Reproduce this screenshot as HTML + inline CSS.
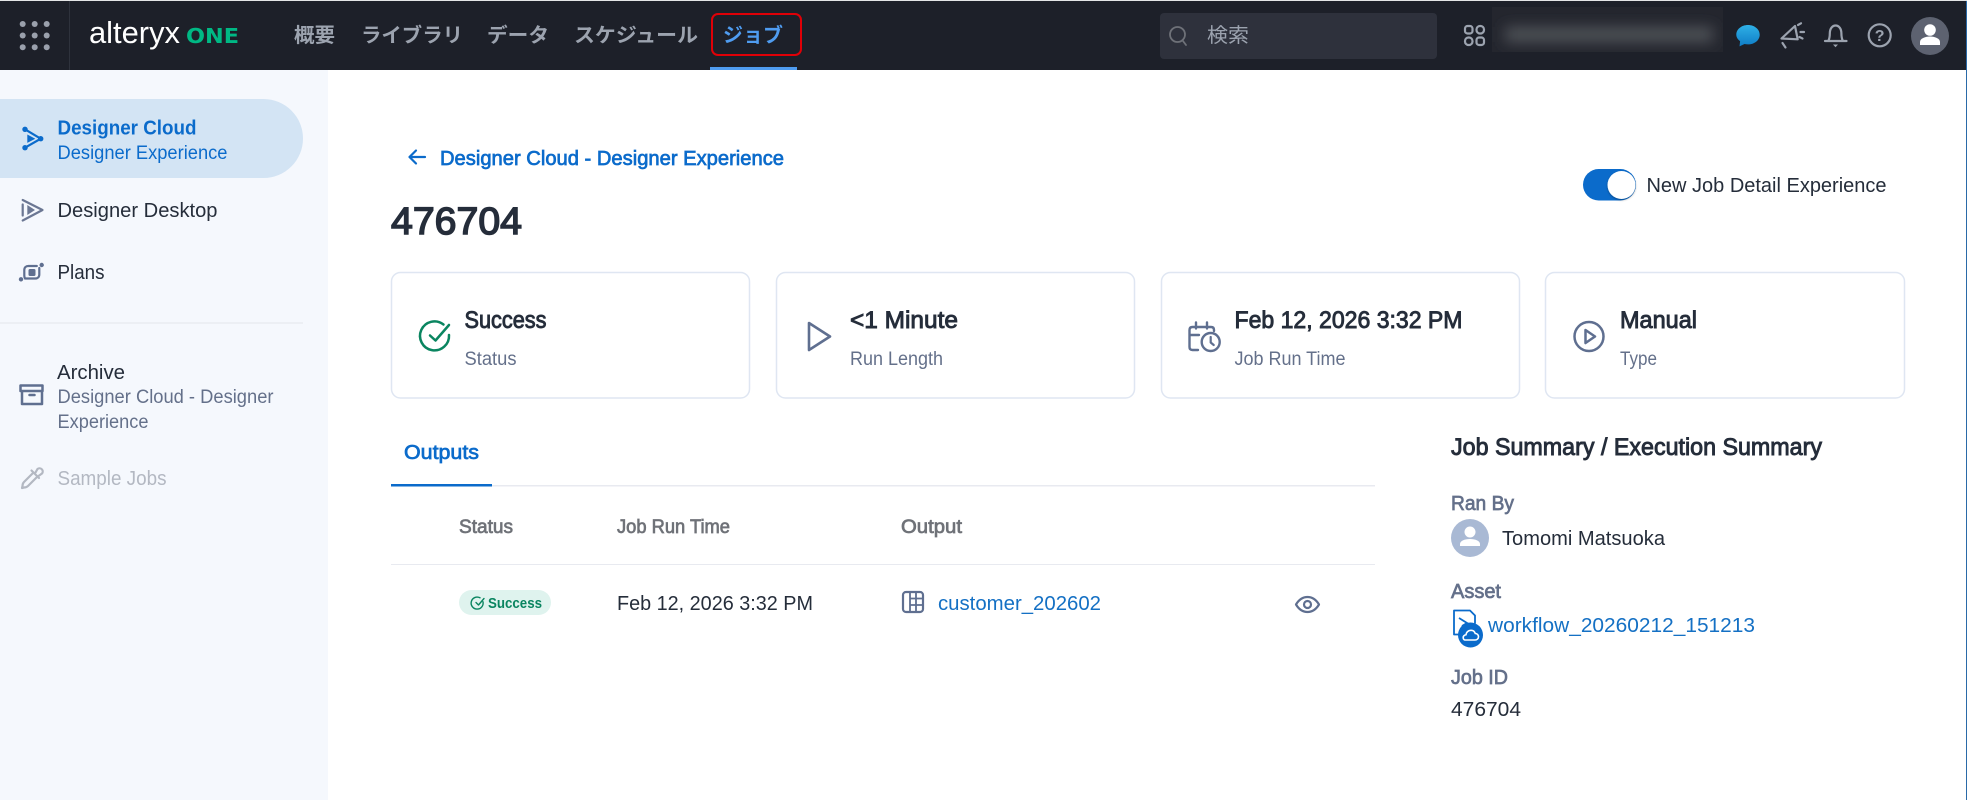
<!DOCTYPE html>
<html lang="ja">
<head>
<meta charset="utf-8">
<title>Job 476704</title>
<style>
html,body{margin:0;padding:0;background:#fff;width:1967px;height:800px;overflow:hidden}
svg{display:block}
text{font-family:"Liberation Sans","Noto Sans CJK JP",sans-serif;font-size:20px;fill:#2b3340}
.m{stroke-width:.7px;paint-order:stroke}
.blue{fill:#0b6bcb}.blue.m{stroke:#0b6bcb}
.link{fill:#1470c4}
.gray{fill:#64708a}.gray.m{stroke:#64708a}
.dk.m{stroke:#252d3a}.dk{fill:#252d3a}
.nav{font-weight:700;fill:#9ca3af}
.th{fill:#6f7278;stroke:#6f7278}
.i{fill:none;stroke:#5f6f90;stroke-width:2.2;stroke-linecap:round;stroke-linejoin:round}
.h{fill:none;stroke:#9ca3af;stroke-width:2.2;stroke-linecap:round;stroke-linejoin:round}
.card{fill:#fff;stroke:#dfe6f2;stroke-width:1.5}
</style>
</head>
<body>
<svg width="1967" height="800" viewBox="0 0 1967 800" xmlns="http://www.w3.org/2000/svg">
<defs>
<linearGradient id="chat" x1="0" y1="0" x2="0" y2="1"><stop offset="0" stop-color="#2fb0e6"/><stop offset="1" stop-color="#0f7cc6"/></linearGradient>
<filter id="bl" x="-20%" y="-150%" width="140%" height="400%"><feGaussianBlur stdDeviation="7"/></filter>
<filter id="sh" x="-30%" y="-30%" width="160%" height="160%"><feDropShadow dx="0" dy="1" stdDeviation="1" flood-color="#000" flood-opacity=".35"/></filter>
<clipPath id="blc"><rect x="1492" y="7" width="231" height="45"/></clipPath>
</defs>

<!-- header -->
<rect width="1967" height="800" fill="#fff"/>
<rect y="1" width="1967" height="69" fill="#1d2029"/>
<rect width="1967" height="1" fill="#e4e5e6"/>
<rect x="69" y="1" width="1" height="69" fill="#2e323c"/>
<g fill="#9aa0ac">
<circle cx="22.7" cy="24" r="3"/><circle cx="34.7" cy="24" r="3"/><circle cx="46.7" cy="24" r="3"/>
<circle cx="22.7" cy="35.5" r="3"/><circle cx="34.7" cy="35.5" r="3"/><circle cx="46.7" cy="35.5" r="3"/>
<circle cx="22.7" cy="47.3" r="3"/><circle cx="34.7" cy="47.3" r="3"/><circle cx="46.7" cy="47.3" r="3"/>
</g>
<text x="89" y="43" style="font-size:31px;fill:#fff" textLength="91" lengthAdjust="spacingAndGlyphs">alteryx</text>
<text x="186" y="43" style="font-family:'DejaVu Sans',sans-serif;font-size:20.500px;font-weight:700;fill:#00b884" textLength="53" lengthAdjust="spacingAndGlyphs">ONE</text>
<text class="nav" x="294" y="42" textLength="41" lengthAdjust="spacingAndGlyphs">概要</text>
<text class="nav" x="361" y="42" textLength="102" lengthAdjust="spacingAndGlyphs">ライブラリ</text>
<text class="nav" x="487" y="42" textLength="62" lengthAdjust="spacingAndGlyphs">データ</text>
<text class="nav" x="574" y="42" textLength="124" lengthAdjust="spacingAndGlyphs">スケジュール</text>
<text class="nav" x="723" y="42" style="fill:#4f9cf0" textLength="60" lengthAdjust="spacingAndGlyphs">ジョブ</text>
<rect x="712" y="14" width="89" height="41" rx="6" fill="none" stroke="#e00007" stroke-width="2"/>
<rect x="710" y="67" width="87" height="3" fill="#4f9cf0"/>

<rect x="1160" y="13" width="277" height="46" rx="4" fill="#2e313c"/>
<circle cx="1177.5" cy="34.5" r="7.5" fill="none" stroke="#6e7178" stroke-width="1.8"/>
<path d="M1183 41l3 4" stroke="#6e7178" stroke-width="1.8" fill="none" stroke-linecap="round"/>
<text x="1207" y="42" style="fill:#9ca3af" textLength="42" lengthAdjust="spacingAndGlyphs">検索</text>

<g class="h">
<rect x="1465" y="26" width="7.5" height="7.5" rx="2.5"/><rect x="1476.5" y="26" width="7.5" height="7.5" rx="3.5"/>
<rect x="1465" y="37.5" width="7.5" height="7.5" rx="3.5"/><rect x="1476.5" y="37.5" width="7.5" height="7.5" rx="2.5"/>
</g>
<rect x="1492" y="7" width="231" height="45" fill="#24262e"/>
<g clip-path="url(#blc)"><rect x="1505" y="27" width="208" height="15" fill="#505259" filter="url(#bl)"/></g>

<path d="M1748 25c6.500 0 11.700 4.300 11.700 9.700s-5.200 9.700-11.700 9.700c-1.200 0-2.400-.2-3.500-.4l-5 2.400 .6-5.300c-2.400-1.800-3.800-3.900-3.800-6.400 0-5.400 5.200-9.700 11.700-9.700z" fill="url(#chat)"/>
<g class="h">
<path d="M1781.500 38.500L1795 26l2.700 13.300z"/><path d="M1782.500 43l3 4.500"/>
<path d="M1798 25l3-1.700M1800.500 32h3.500M1799.500 37l3 1.500"/>
<path d="M1825 41h21.500M1828.500 40.500c1-2 1.300-3.500 1.300-7 0-4.800 2.500-8 5.800-8s5.800 3.200 5.800 8c0 3.500.3 5 1.300 7"/>
<circle cx="1879.700" cy="35.300" r="11"/>
</g>
<path d="M1833 44.500h5l-2.500 2.800z" fill="#9ca3af"/>
<text x="1879.700" y="41" text-anchor="middle" style="font-size:16px;font-weight:700;fill:#9ca3af">?</text>
<circle cx="1930" cy="36" r="19" fill="#5d6270"/>
<circle cx="1930" cy="30" r="5.800" fill="#fff"/>
<path d="M1920 45v-3c0-3.500 5-5.500 10-5.500s10 2 10 5.500v3z" fill="#fff"/>

<!-- sidebar -->
<rect y="70" width="328" height="730" fill="#f5f8fd"/>
<path d="M0 99h263.500a39.500 39.500 0 0 1 0 79H0z" fill="#d3e4f4"/>
<g fill="#0b6bcb" stroke="#0b6bcb">
<path d="M25 129.300L40.700 138.700 25 147.700" fill="none" stroke-width="2.200"/>
<circle cx="25" cy="129.300" r="2.700" stroke="none"/><circle cx="40.700" cy="138.700" r="2.700" stroke="none"/><circle cx="25" cy="147.700" r="2.700" stroke="none"/>
<path d="M27.300 134.500l8 4.200-8 4.200z" stroke="none"/>
</g>
<text class="blue" style="font-weight:700" x="57.500" y="134.500" textLength="139" lengthAdjust="spacingAndGlyphs">Designer Cloud</text>
<text class="blue" x="57.500" y="159" style="font-size:19px" textLength="170" lengthAdjust="spacingAndGlyphs">Designer Experience</text>

<path class="i" style="stroke:#6b7793" d="M22.700 200L42.500 210 22.700 220.500M22.700 204.500v11"/>
<path d="M27.300 205l7.700 5-7.700 5z" fill="#6b7793"/>
<text class="dk" x="57.500" y="217" textLength="160" lengthAdjust="spacingAndGlyphs">Designer Desktop</text>

<path class="i" d="M25 278.500c-.5-1-.7-1.800-.7-3v-5.500c0-2.500 1.700-4 4-4h8.500M39.300 268v6.500c0 2.500-1.700 4-4 4H25"/>
<rect x="28.500" y="269" width="7" height="7" rx="1.500" fill="#5f6f90"/>
<circle cx="41.700" cy="265" r="2.200" fill="#5f6f90"/><circle cx="21" cy="279.300" r="2.200" fill="#5f6f90"/>
<text class="dk" x="57.500" y="279" textLength="47" lengthAdjust="spacingAndGlyphs">Plans</text>

<rect y="322.500" width="303" height="1" fill="#e2e6ec"/>

<path class="i" style="stroke-width:2.500" d="M20.500 385.500h22v5.500h-22zM22 391v13h20v-13M29.500 395h5"/>
<text class="dk" x="57" y="379" textLength="68" lengthAdjust="spacingAndGlyphs">Archive</text>
<text class="gray" x="57.500" y="403" style="font-size:19.500px" textLength="216" lengthAdjust="spacingAndGlyphs">Designer Cloud - Designer</text>
<text class="gray" x="57.500" y="428" style="font-size:19.500px" textLength="91" lengthAdjust="spacingAndGlyphs">Experience</text>
<path class="i" style="stroke:#b3b8c2" d="M33.500 472.500L24 482c-1 1-1.500 2.500-1.500 4l-.5 2 2-.5c1.500 0 3-.5 4-1.500l9.500-9.500M31.500 470.500L39 478M35.500 472.500l2-3.500a3.200 3.200 0 0 1 4.500 4.500l-3.500 2.500"/>
<text x="57.500" y="485" style="fill:#b3b8c2" textLength="109" lengthAdjust="spacingAndGlyphs">Sample Jobs</text>

<!-- page head -->
<path d="M425 157h-15.500M416 150.500l-6.500 6.500 6.500 6.500" fill="none" stroke="#0b6bcb" stroke-width="2.200" stroke-linecap="round" stroke-linejoin="round"/>
<text class="blue m" x="440" y="165" textLength="344" lengthAdjust="spacingAndGlyphs">Designer Cloud - Designer Experience</text>
<text class="dk m" x="391" y="234" style="font-size:38px;stroke-width:1.500px" textLength="131" lengthAdjust="spacingAndGlyphs">476704</text>

<rect x="1583" y="169" width="53" height="31.500" rx="15.700" fill="#0b6bcb"/>
<circle cx="1621.500" cy="185" r="14" fill="#fff" filter="url(#sh)"/>
<text class="dk" x="1646.500" y="192" textLength="240" lengthAdjust="spacingAndGlyphs">New Job Detail Experience</text>

<!-- cards -->
<rect class="card" x="391.500" y="272.500" width="358" height="125.500" rx="9"/>
<rect class="card" x="776.500" y="272.500" width="358" height="125.500" rx="9"/>
<rect class="card" x="1161.500" y="272.500" width="358" height="125.500" rx="9"/>
<rect class="card" x="1545.500" y="272.500" width="359" height="125.500" rx="9"/>

<path d="M443.500 324.500A14.500 14.500 0 1 0 449 335M430 335.500l5.500 5 13.500-15.500" fill="none" stroke="#0a8560" stroke-width="2.500" stroke-linecap="round" stroke-linejoin="round"/>
<text class="dk m" x="464.500" y="328" style="font-size:24px;stroke-width:.9px" textLength="82" lengthAdjust="spacingAndGlyphs">Success</text>
<text class="gray" x="464.500" y="365" style="font-size:19px" textLength="52" lengthAdjust="spacingAndGlyphs">Status</text>

<path class="i" style="stroke-width:2.600" d="M809 323l21 13.500-21 13.500z"/>
<text class="dk m" x="850" y="328" style="font-size:24px;stroke-width:.9px" textLength="108" lengthAdjust="spacingAndGlyphs">&lt;1 Minute</text>
<text class="gray" x="850" y="365" style="font-size:19px" textLength="93" lengthAdjust="spacingAndGlyphs">Run Length</text>

<path class="i" style="stroke-width:2.400" d="M1198 350h-5.500c-2 0-3-1-3-3v-17c0-2 1-3 3-3h18.500c2 0 3 1 3 3v1M1189.500 335h9.500M1196 322.500v6M1207 322.500v6"/>
<circle class="i" style="stroke-width:2.400" cx="1210.700" cy="342" r="9"/>
<path class="i" d="M1210.700 337v5.500l3 2.500"/>
<text class="dk m" x="1234.500" y="328" style="font-size:24px;stroke-width:.9px" textLength="228" lengthAdjust="spacingAndGlyphs">Feb 12, 2026 3:32 PM</text>
<text class="gray" x="1234.500" y="365" style="font-size:19px" textLength="111" lengthAdjust="spacingAndGlyphs">Job Run Time</text>

<circle class="i" style="stroke-width:2.500" cx="1589" cy="336.500" r="14.500"/>
<path class="i" style="stroke-width:2.500" d="M1585.500 330l9.500 6.500-9.500 6.500z"/>
<text class="dk m" x="1620" y="328" style="font-size:24px;stroke-width:.9px" textLength="77" lengthAdjust="spacingAndGlyphs">Manual</text>
<text class="gray" x="1620" y="365" style="font-size:19px" textLength="37" lengthAdjust="spacingAndGlyphs">Type</text>

<!-- tabs -->
<rect x="391" y="485" width="984" height="1.500" fill="#e8eaf0"/>
<rect x="391" y="484" width="101" height="2.500" fill="#0b6bcb"/>
<text class="blue m" x="404" y="459" textLength="75" lengthAdjust="spacingAndGlyphs">Outputs</text>

<text class="th m" x="459" y="533" style="font-size:19px" textLength="54" lengthAdjust="spacingAndGlyphs">Status</text>
<text class="th m" x="617" y="533" style="font-size:19px" textLength="113" lengthAdjust="spacingAndGlyphs">Job Run Time</text>
<text class="th m" x="901" y="533" style="font-size:19px" textLength="61" lengthAdjust="spacingAndGlyphs">Output</text>
<rect x="391" y="564" width="984" height="1" fill="#e8eaf0"/>

<rect x="459" y="590" width="92" height="25" rx="12.500" fill="#dff3ee"/>
<path d="M480 597.800a6 6 0 1 0 3 4M476 602.500l2.500 2.500 5.500-6.500" fill="none" stroke="#0a8560" stroke-width="1.400" stroke-linecap="round" stroke-linejoin="round"/>
<text x="488" y="608" style="font-size:15px;font-weight:700;fill:#0a8560" textLength="54" lengthAdjust="spacingAndGlyphs">Success</text>
<text class="dk" x="617" y="610" textLength="196" lengthAdjust="spacingAndGlyphs">Feb 12, 2026 3:32 PM</text>

<rect class="i" x="903" y="592" width="20" height="20" rx="3"/>
<path class="i" style="stroke-width:1.800" d="M910 592v20M916 592v20M910 598.500h13M910 605h13"/>
<text class="link" x="938" y="610" textLength="163" lengthAdjust="spacingAndGlyphs">customer_202602</text>

<path class="i" d="M1296 604.500c3-5 7-7.500 11.500-7.500s8.500 2.500 11.500 7.500c-3 5-7 7.500-11.500 7.500s-8.500-2.500-11.500-7.500z"/>
<circle class="i" cx="1307.500" cy="604.500" r="3.500"/>

<!-- summary -->
<text class="dk m" x="1451" y="455" style="font-size:24px;stroke-width:.9px" textLength="371" lengthAdjust="spacingAndGlyphs">Job Summary / Execution Summary</text>
<text class="gray m" x="1451" y="510" textLength="63" lengthAdjust="spacingAndGlyphs">Ran By</text>
<circle cx="1470" cy="538" r="19" fill="#a9b9d4"/>
<circle cx="1470" cy="532" r="5.500" fill="#fff"/>
<path d="M1460 546v-2c0-3 4.500-5 10-5s10 2 10 5v2z" fill="#fff"/>
<text class="dk" x="1502" y="545" textLength="163" lengthAdjust="spacingAndGlyphs">Tomomi Matsuoka</text>
<text class="gray m" x="1451" y="598" textLength="50" lengthAdjust="spacingAndGlyphs">Asset</text>
<path d="M1462 634.500h-8v-24h16l5 5v8" fill="none" stroke="#0b6bcb" stroke-width="1.800" stroke-linejoin="round"/>
<path d="M1459 618l8 5-5 3" fill="none" stroke="#0b6bcb" stroke-width="1.800"/>
<circle cx="1470.500" cy="635" r="12.500" fill="#0b6bcb"/>
<path d="M1465 640h10c2 0 3.500-1.500 3.500-3.300s-1.500-3.200-3.200-3.200c-.7-2-2.300-3.200-4.300-3.200-2.800 0-4.800 2-5 4.400-1.600.3-2.800 1.500-2.800 2.900 0 1.400 1 2.400 1.800 2.400z" fill="none" stroke="#fff" stroke-width="1.600"/>
<text class="link" x="1488" y="632" textLength="267" lengthAdjust="spacingAndGlyphs">workflow_20260212_151213</text>
<text class="gray m" x="1451" y="684" textLength="57" lengthAdjust="spacingAndGlyphs">Job ID</text>
<text class="dk" x="1451" y="716" textLength="70" lengthAdjust="spacingAndGlyphs">476704</text>

<rect x="1966" y="1" width="1" height="799" fill="#2a6aa8"/>
</svg>
</body>
</html>
